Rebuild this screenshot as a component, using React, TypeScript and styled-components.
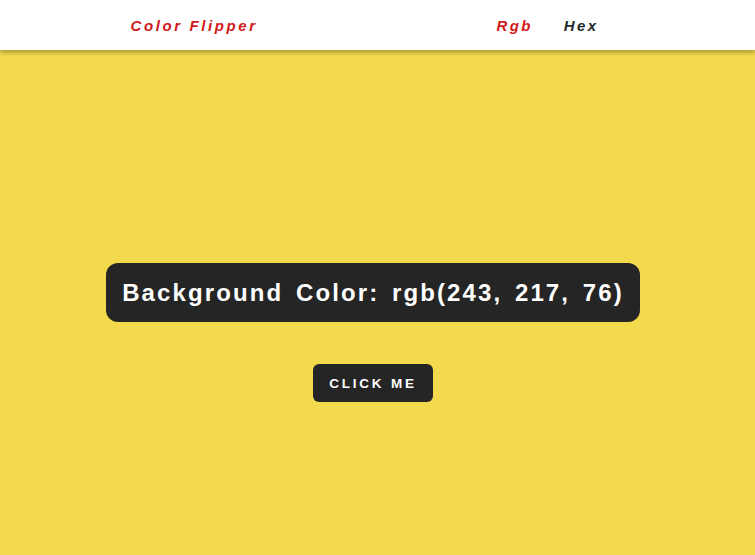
import React, { useState } from 'react';
import styled, { createGlobalStyle } from 'styled-components';

const GlobalStyle = createGlobalStyle`
  * { box-sizing: border-box; }
  html, body { margin: 0; padding: 0; overflow: hidden; }
  body { font-family: "Liberation Sans", Arial, sans-serif; }
`;

const Page = styled.div<{ $bg: string }>`
  min-height: 100vh;
  background-color: ${({ $bg }) => $bg};
`;

const Nav = styled.nav`
  height: 50px;
  background: #fff;
  box-shadow: 0 2px 5px rgba(0, 0, 0, 0.35);
  position: relative;
  z-index: 1;
`;

const NavCenter = styled.div`
  height: 100%;
  width: 494px;
  margin: 0 auto;
  display: flex;
  align-items: center;
  justify-content: space-between;
  padding-right: 26px;
`;

const Logo = styled.h4`
  margin: 0;
  font-size: 15px;
  font-style: italic;
  font-weight: 700;
  letter-spacing: 2.6px;
  color: #d11a1a;
`;

const Links = styled.ul`
  list-style: none;
  margin: 0;
  padding: 0;
  display: flex;
  gap: 31px;
`;

const LinkItem = styled.li<{ $active?: boolean }>`
  font-size: 15px;
  font-style: italic;
  font-weight: 700;
  letter-spacing: 2.4px;
  color: ${({ $active }) => ($active ? '#d11a1a' : '#1f2b2b')};
  cursor: pointer;
`;

const Main = styled.main`
  height: calc(100vh - 50px);
  padding: 60px 9px 0 0;
  display: flex;
  flex-direction: column;
  align-items: center;
  justify-content: center;
`;

const ColorBox = styled.h2`
  margin: 0 0 42px;
  background: #252525;
  color: #fff;
  border-radius: 12px;
  padding: 0 16px;
  height: 59px;
  display: flex;
  align-items: center;
  font-size: 24px;
  font-weight: 700;
  letter-spacing: 2.1px;
  word-spacing: 4px;
`;

const Button = styled.button`
  background: #252525;
  color: #fff;
  border: none;
  border-radius: 6px;
  height: 38px;
  padding: 0 16px;
  font-family: "Liberation Sans", Arial, sans-serif;
  font-size: 13.5px;
  font-weight: 700;
  text-transform: uppercase;
  letter-spacing: 2.8px;
  cursor: pointer;
`;

const App: React.FC = () => {
  const [color] = useState('rgb(243, 217, 76)');

  return (
    <Page $bg={color}>
      <GlobalStyle />
      <Nav>
        <NavCenter>
          <Logo>Color Flipper</Logo>
          <Links>
            <LinkItem $active>Rgb</LinkItem>
            <LinkItem>Hex</LinkItem>
          </Links>
        </NavCenter>
      </Nav>
      <Main>
        <ColorBox>Background Color: {color}</ColorBox>
        <Button>Click me</Button>
      </Main>
    </Page>
  );
};

export default App;
